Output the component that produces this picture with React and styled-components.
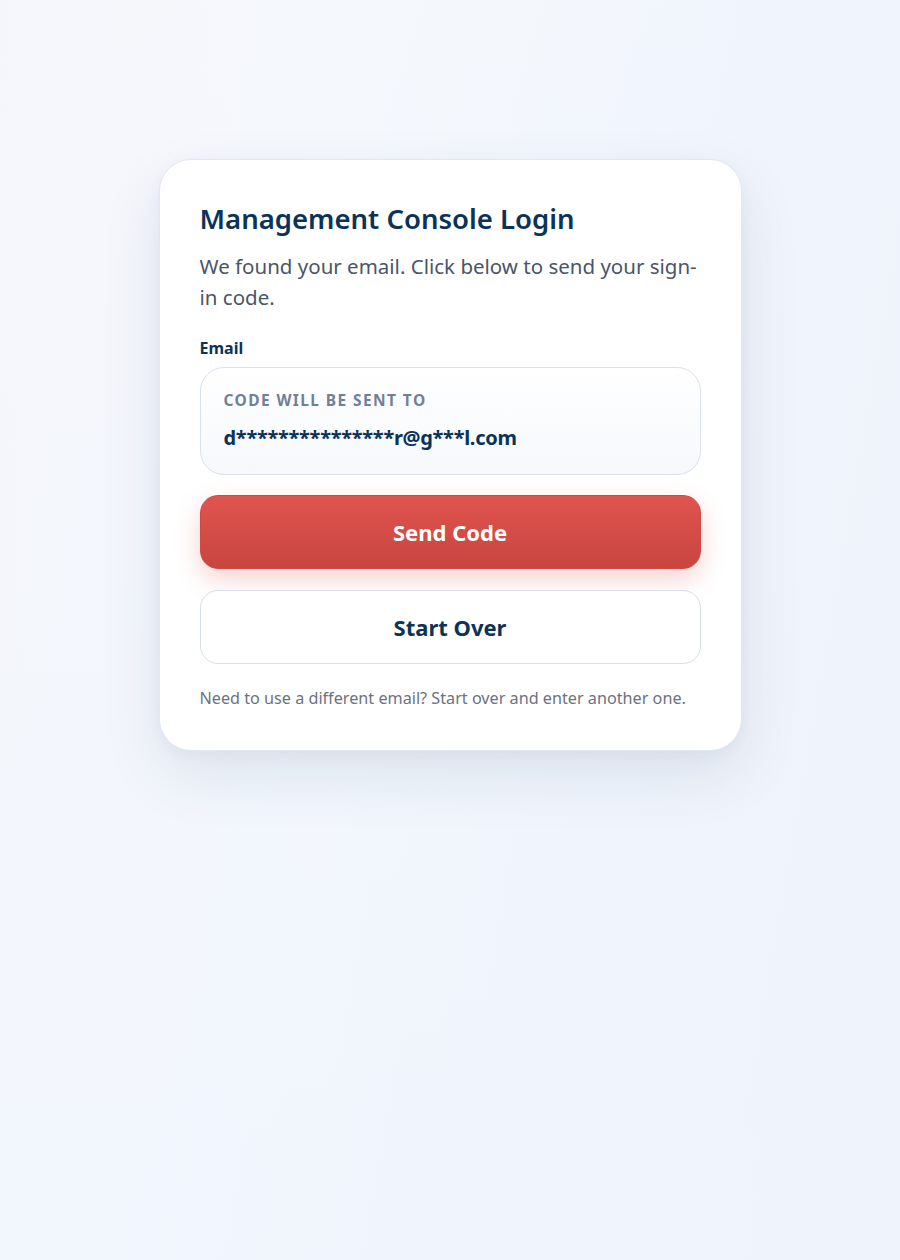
import React from "react";
import styled, { createGlobalStyle } from "styled-components";

const GlobalStyle = createGlobalStyle`
  html, body {
    margin: 0;
    padding: 0;
  }
  body {
    font-family: "Noto Sans", "Open Sans", Arial, sans-serif;
    background: linear-gradient(100deg, #f5f6fb 0%, #f5f9fd 35%, #f0f4fc 70%, #eef2f9 100%);
    min-height: 1260px;
  }
`;

const Page = styled.div`
  min-height: 1260px;
  display: flex;
  justify-content: center;
  align-items: flex-start;
  padding-top: 159px;
  box-sizing: border-box;
  background: linear-gradient(180deg, rgba(255, 255, 255, 0) 0%, rgba(239, 244, 253, 0.6) 100%);
`;

const Card = styled.div`
  width: 583px;
  box-sizing: border-box;
  padding: 39px 40px 40px;
  background: #ffffff;
  border: 1px solid #e3e8ef;
  border-radius: 32px;
  box-shadow: 0 24px 60px rgba(30, 55, 90, 0.1), 0 4px 14px rgba(30, 55, 90, 0.04);
`;

const Title = styled.h1`
  margin: 0;
  font-size: 27.5px;
  font-weight: 600;
  line-height: 40px;
  color: #0b3358;
`;

const Subtitle = styled.p`
  margin: 12px 0 0;
  font-size: 20.5px;
  line-height: 31px;
  color: #4a5568;
`;

const Label = styled.div`
  margin-top: 24px;
  font-size: 16px;
  font-weight: 700;
  line-height: 22px;
  color: #0b3358;
`;

const Recipient = styled.div`
  margin-top: 8px;
  padding: 22px 23px 22px;
  border: 1px solid #d9e1ec;
  border-radius: 24px;
  background: linear-gradient(180deg, #ffffff 0%, #f6f8fc 100%);
`;

const Caption = styled.div`
  font-size: 15.5px;
  font-weight: 700;
  letter-spacing: 1.4px;
  text-transform: uppercase;
  line-height: 20px;
  color: #718096;
`;

const Address = styled.div`
  margin-top: 14px;
  font-size: 20px;
  font-weight: 700;
  letter-spacing: -0.3px;
  line-height: 28px;
  color: #0b3358;
`;

const Button = styled.button`
  display: block;
  width: 100%;
  height: 74px;
  margin-top: ${({ $gap }) => $gap}px;
  border-radius: 18px;
  font-family: inherit;
  font-size: 22px;
  font-weight: 700;
  cursor: pointer;
  border: 1px solid ${({ $primary }) => ($primary ? "#cf4a45" : "#d6dee8")};
  color: ${({ $primary }) => ($primary ? "#ffffff" : "#0b3358")};
  background: ${({ $primary }) =>
    $primary ? "linear-gradient(180deg, #e0544e 0%, #c84540 100%)" : "#ffffff"};
  box-shadow: ${({ $primary }) =>
    $primary ? "0 10px 24px rgba(220, 80, 70, 0.25)" : "none"};
`;

const Hint = styled.p`
  margin: 22px 0 0;
  font-size: 16.2px;
  line-height: 24px;
  color: #6b7280;
`;

export default function App() {
  return (
    <>
      <GlobalStyle />
      <Page>
        <Card>
          <Title>Management Console Login</Title>
          <Subtitle>
            We found your email. Click below to send your sign-in code.
          </Subtitle>
          <Label>Email</Label>
          <Recipient>
            <Caption>Code will be sent to</Caption>
            <Address>d***************r@g***l.com</Address>
          </Recipient>
          <Button $primary $gap={20}>Send Code</Button>
          <Button $gap={21}>Start Over</Button>
          <Hint>Need to use a different email? Start over and enter another one.</Hint>
        </Card>
      </Page>
    </>
  );
}
